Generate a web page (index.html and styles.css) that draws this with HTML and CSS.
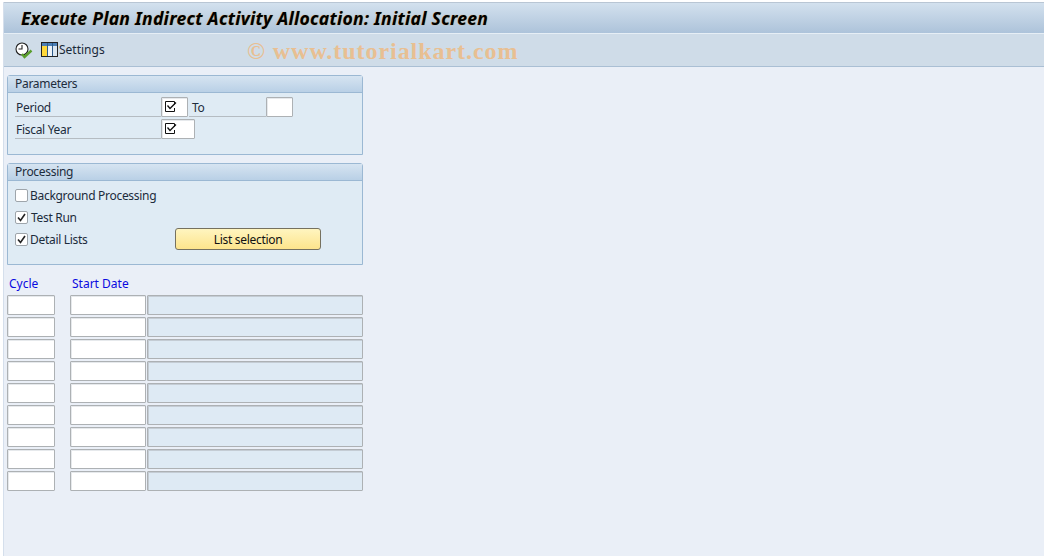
FILE: index.html
```html
<!DOCTYPE html>
<html lang="en">
<head>
<meta charset="utf-8">
<title>Execute Plan Indirect Activity Allocation: Initial Screen</title>
<link rel="stylesheet" href="styles.css">
</head>
<body>
<div class="shell">
  <header class="titlebar"><h1>Execute Plan Indirect Activity Allocation: Initial Screen</h1></header>
  <div class="toolbar">
    <svg class="icon-clock" width="18" height="17" viewBox="0 0 18 17">
      <circle cx="7" cy="7" r="6" fill="#fff" stroke="#222" stroke-width="1.100"/>
      <path d="M7 3V7H3.500" fill="none" stroke="#222" stroke-width="1.100"/>
      <path d="M7 12l2.500 3 7-6.500" fill="none" stroke="#5a9e2c" stroke-width="2.400"/>
    </svg>
    <button class="tool">
      <svg width="18" height="16" viewBox="0 0 18 16">
        <rect x=".5" y=".5" width="16" height="14" fill="#fff" stroke="#222"/>
        <rect x="1" y="1" width="15" height="3" fill="#4c7fb5"/>
        <rect x="1" y="4" width="5" height="10" fill="#ffd83a"/>
        <rect x="7" y="4" width="4" height="10" fill="#eef3f8"/>
        <rect x="12" y="4" width="4" height="10" fill="#dbe6f0"/>
        <path d="M6.500 1v13M11.500 1v13" stroke="#2c5a8a"/>
      </svg>
      <span>Settings</span>
    </button>
    <div class="watermark">© www.tutorialkart.com</div>
  </div>
  <main class="content">
    <section class="group params">
      <h2>Parameters</h2>
      <div class="group-body">
        <div class="row">
          <label class="lbl">Period</label>
          <span class="field f27"><svg class="chk" width="12" height="12" viewBox="0 0 12 12"><path d="M9.500 3.500V.5H.5v10h9V7" fill="none" stroke="#111"/><path d="M2.500 4.500l2.500 3 6-6" fill="none" stroke="#111" stroke-width="1.300"/></svg></span>
          <label class="lbl lbl-to">To</label>
          <span class="field f27"></span>
        </div>
        <div class="row">
          <label class="lbl">Fiscal Year</label>
          <span class="field f34"><svg class="chk" width="12" height="12" viewBox="0 0 12 12"><path d="M9.500 3.500V.5H.5v10h9V7" fill="none" stroke="#111"/><path d="M2.500 4.500l2.500 3 6-6" fill="none" stroke="#111" stroke-width="1.300"/></svg></span>
        </div>
      </div>
    </section>
    <section class="group proc">
      <h2>Processing</h2>
      <div class="group-body">
        <div class="row"><span class="cb"></span><span class="cb-text">Background Processing</span></div>
        <div class="row"><span class="cb on"><svg width="9" height="9" viewBox="0 0 9 9"><path d="M1 4.500l2.500 3L8 1" fill="none" stroke="#222" stroke-width="1.600"/></svg></span><span class="cb-text wide">Test Run</span></div>
        <div class="row"><span class="cb on"><svg width="9" height="9" viewBox="0 0 9 9"><path d="M1 4.500l2.500 3L8 1" fill="none" stroke="#222" stroke-width="1.600"/></svg></span><span class="cb-text detail">Detail Lists</span><button class="btn">List selection</button></div>
      </div>
    </section>
    <div class="table-head"><span class="th cycle">Cycle</span><span class="th">Start Date</span></div>
    <div class="table">
      <div class="trow"><span class="cell"></span><span class="cell"></span><span class="cell ro"></span></div>
      <div class="trow"><span class="cell"></span><span class="cell"></span><span class="cell ro"></span></div>
      <div class="trow"><span class="cell"></span><span class="cell"></span><span class="cell ro"></span></div>
      <div class="trow"><span class="cell"></span><span class="cell"></span><span class="cell ro"></span></div>
      <div class="trow"><span class="cell"></span><span class="cell"></span><span class="cell ro"></span></div>
      <div class="trow"><span class="cell"></span><span class="cell"></span><span class="cell ro"></span></div>
      <div class="trow"><span class="cell"></span><span class="cell"></span><span class="cell ro"></span></div>
      <div class="trow"><span class="cell"></span><span class="cell"></span><span class="cell ro"></span></div>
      <div class="trow"><span class="cell"></span><span class="cell"></span><span class="cell ro"></span></div>
    </div>
  </main>
</div>
</body>
</html>
```
FILE: styles.css
```css
* { box-sizing: border-box; }
html, body { margin: 0; height: 100%; }
body {
  background: #ffffff;
  font: 12px "Noto Sans", "Open Sans", sans-serif;
  color: #111;
  overflow: hidden;
}
.shell {
  height: 556px;
  margin-top: 2px;
  margin-left: 3px;
  border-left: 1px solid #d5dfec;
  background: #eaeff7;
  display: flex;
  flex-direction: column;
}
.titlebar {
  height: 31px;
  padding-left: 17px;
  display: flex;
  align-items: center;
  background: linear-gradient(#d3e1ee, #adc3da);
  border-top: 1px solid #b9c6d4;
}
.titlebar h1 {
  margin: 0;
  font: italic bold 17.500px "Noto Sans", sans-serif;
  letter-spacing: .3px;
  color: #000;
  text-shadow: 0 0 1px #c89a50;
}
.toolbar {
  position: relative;
  height: 34px;
  padding-left: 11px;
  display: flex;
  align-items: center;
  gap: 8px;
  background: #cfdce8;
  border-top: 1px solid #e6eef5;
  border-bottom: 1px solid #aabfd4;
}
.tool {
  display: flex;
  align-items: center;
  gap: 0;
  padding: 0;
  border: 0;
  background: none;
  font: inherit;
  line-height: 15px;
  color: #1a2a3a;
}
.tool span { margin-top: -1px; }
.watermark {
  position: absolute;
  left: 243px;
  top: 4px;
  font: bold 24px "Liberation Serif", serif;
  letter-spacing: .95px;
  color: #e8bf92;
}
.content { padding: 8px 0 0 3px; }
.group {
  width: 356px;
  border: 1px solid #9bb8d3;
  border-radius: 3px 3px 0 0;
  background: #dfebf4;
  letter-spacing: -.3px;
}
.group h2 {
  margin: 0;
  height: 17px;
  padding-left: 7px;
  font: inherit;
  line-height: 15px;
  color: #1c2c3c;
  background: linear-gradient(#d6e4f1, #b9d0e6);
  border-bottom: 1px solid #9bb8d3;
}
.params { height: 80px; }
.proc { height: 102px; margin-top: 8px; }
.group-body { padding: 4px 0 0 7px; display: flex; flex-direction: column; gap: 2px; }
.row { height: 20px; display: flex; align-items: center; }
.lbl {
  width: 146px;
  height: 20px;
  padding-left: 1px;
  line-height: 22px;
  color: #1c2c3c;
  border-bottom: 1px solid #b5bcc2;
}
.params .row { align-items: flex-start; }
.lbl-to { width: 77px; margin-left: 1px; padding-left: 3px; }
.field {
  display: block;
  height: 20px;
  background: #fff;
  border: 1px solid #adb1b4;
  border-radius: 1px;
  box-shadow: inset 1px 1px 0 #e6e9ec;
}
.f27 { width: 27px; }
.f34 { width: 34px; }
.chk { display: block; margin: 3px 0 0 3px; }
.cb {
  width: 13px;
  height: 13px;
  background: #fff;
  border: 1px solid #9ea5ab;
  border-radius: 2px;
  display: flex;
  align-items: center;
  justify-content: center;
}
.cb-text { margin-left: 2px; color: #1c2c3c; line-height: 18px; margin-top: 2px; }
.cb-text.wide { margin-left: 3px; }
.btn {
  width: 146px;
  height: 22px;
  margin-left: 18px;
  padding: 0;
  border: 1px solid #76715f;
  border-radius: 3px;
  background: linear-gradient(#fff5c0, #fde48c);
  font: inherit;
  letter-spacing: inherit;
  color: #111;
}
.detail { width: 127px; flex: none; }
.table-head {
  margin-top: 10px;
  height: 20px;
  display: flex;
  padding-left: 2px;
  color: #0a0ae0;
  line-height: 17px;
}
.th.cycle { width: 63px; }
.table { display: flex; flex-direction: column; gap: 2px; }
.trow { display: grid; width: 356px; grid-template-columns: 48px 76px 1fr; height: 20px; }
.cell {
  background: #fff;
  border: 1px solid #adb1b4;
  border-radius: 1px;
  box-shadow: inset 1px 1px 0 #e6e9ec;
}
.cell:nth-child(2) { margin-left: 15px; width: 76px; }
.cell.ro { background: #deeaf4; margin-left: 16px; box-shadow: inset 1px 1px 0 #c4ccd4; }
```
